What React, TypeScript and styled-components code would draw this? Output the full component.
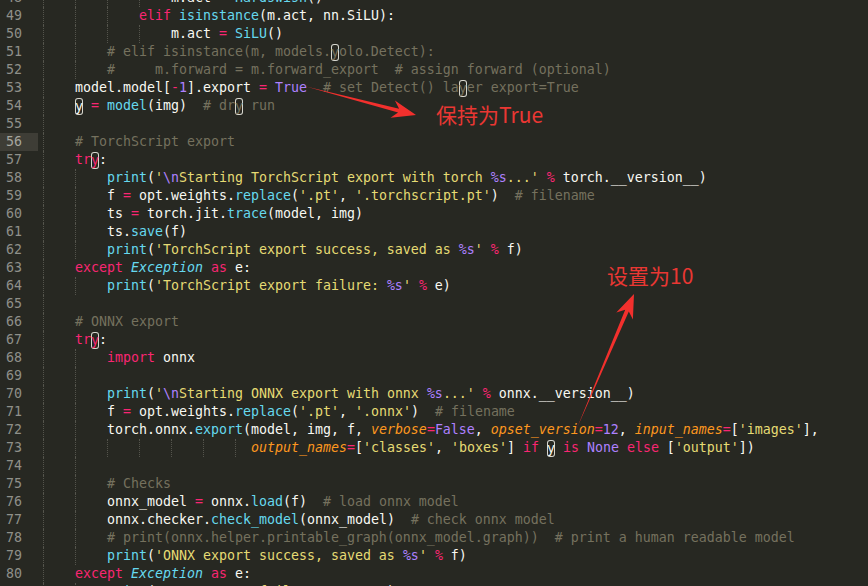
import React from 'react';
import styled, { createGlobalStyle, css } from 'styled-components';

const GlobalStyle = createGlobalStyle`
  html, body {
    margin: 0;
    padding: 0;
    background: #272822;
    overflow: hidden;
  }
`;

type Kind = 't' | 'k' | 'f' | 's' | 'c' | 'n' | 'a' | 'e';

const colors: Record<Kind, string> = {
  t: '#f8f8f2',
  k: '#f92672',
  f: '#66d9ef',
  s: '#e6db74',
  c: '#75715e',
  n: '#ae81ff',
  a: '#fd971f',
  e: '#66d9ef',
};

// {kind|text}, kind followed by "b" draws the find-match box round it
const source: [number, string][] = [
  [48, '                m.act {k|=} {f|Hardswish}()'],
  [49, '            {k|elif} {f|isinstance}(m.act, nn.SiLU):'],
  [50, '                m.act {k|=} {f|SiLU}()'],
  [51, '        {c|# elif isinstance(m, models.}{cb|y}{c|olo.Detect):}'],
  [52, '        {c|#     m.forward = m.forward_export  # assign forward (optional)}'],
  [53, '    model.model[{k|-}{n|1}].export {k|=} {n|True}  {c|# set Detect() la}{cb|y}{c|er export=True}'],
  [54, '    {tb|y} {k|=} {f|model}(img)  {c|# dr}{cb|y}{c| run}'],
  [55, ''],
  [56, '    {c|# TorchScript export}'],
  [57, '    {k|tr}{kb|y}:'],
  [58, "        {f|print}({s|'}{n|\\n}{s|Starting TorchScript export with torch }{n|%s}{s|...'} {k|%} torch.__version__)"],
  [59, "        f {k|=} opt.weights.{f|replace}({s|'.pt'}, {s|'.torchscript.pt'})  {c|# filename}"],
  [60, '        ts {k|=} torch.jit.{f|trace}(model, img)'],
  [61, '        ts.{f|save}(f)'],
  [62, "        {f|print}({s|'TorchScript export success, saved as }{n|%s}{s|'} {k|%} f)"],
  [63, '    {k|except} {e|Exception} {k|as} e:'],
  [64, "        {f|print}({s|'TorchScript export failure: }{n|%s}{s|'} {k|%} e)"],
  [65, ''],
  [66, '    {c|# ONNX export}'],
  [67, '    {k|tr}{kb|y}:'],
  [68, '        {k|import} onnx'],
  [69, ''],
  [70, "        {f|print}({s|'}{n|\\n}{s|Starting ONNX export with onnx }{n|%s}{s|...'} {k|%} onnx.__version__)"],
  [71, "        f {k|=} opt.weights.{f|replace}({s|'.pt'}, {s|'.onnx'})  {c|# filename}"],
  [72, "        torch.onnx.{f|export}(model, img, f, {a|verbose}{k|=}{n|False}, {a|opset_version}{k|=}{n|12}, {a|input_names}{k|=}[{s|'images'}],"],
  [73, "                          {a|output_names}{k|=}[{s|'classes'}, {s|'boxes'}] {k|if} {tb|y} {k|is} {n|None} {k|else} [{s|'output'}])"],
  [74, ''],
  [75, '        {c|# Checks}'],
  [76, '        onnx_model {k|=} onnx.{f|load}(f)  {c|# load onnx model}'],
  [77, '        onnx.checker.{f|check_model}(onnx_model)  {c|# check onnx model}'],
  [78, '        {c|# print(onnx.helper.printable_graph(onnx_model.graph))  # print a human readable model}'],
  [79, "        {f|print}({s|'ONNX export success, saved as }{n|%s}{s|'} {k|%} f)"],
  [80, '    {k|except} {e|Exception} {k|as} e:'],
  [81, "        {f|print}({s|'ONNX export failure: }{n|%s}{s|'} {k|%} e)"],
];

// indent guides drawn on blank lines
const blankGuides: Record<number, number> = { 55: 1, 65: 1, 69: 2, 74: 2 };

const ACTIVE = 56;

type Token = { kind: Kind; text: string; boxed: boolean };

function tokenize(body: string): Token[] {
  const out: Token[] = [];
  const re = /\{(\w+)\|([^}]*)\}/g;
  let last = 0;
  let m: RegExpExecArray | null;
  while ((m = re.exec(body))) {
    if (m.index > last) out.push({ kind: 't', text: body.slice(last, m.index), boxed: false });
    const tag = m[1];
    out.push({ kind: tag[0] as Kind, text: m[2], boxed: tag.length > 1 });
    last = re.lastIndex;
  }
  if (last < body.length) out.push({ kind: 't', text: body.slice(last), boxed: false });
  return out;
}

function CodeLine({ no, text }: { no: number; text: string }) {
  const spaces = text.length - text.trimStart().length;
  const body = text.slice(spaces);
  const groups: number[] = [];
  if (body === '') {
    for (let i = 0; i < (blankGuides[no] || 0); i++) groups.push(4);
  } else {
    for (let i = 0; i < spaces; i += 4) groups.push(Math.min(4, spaces - i));
  }
  return (
    <Row>
      <LineNo $active={no === ACTIVE}>{no}</LineNo>
      <Code>
        {groups.map((w, i) => (
          <Indent key={i} $chars={w} />
        ))}
        {tokenize(body).map((t, i) => (
          <Tok key={i} $kind={t.kind} $boxed={t.boxed}>
            {t.text}
          </Tok>
        ))}
      </Code>
    </Row>
  );
}

export default function App() {
  return (
    <>
      <GlobalStyle />
      <Screen>
        <Editor>
          {source.map(([no, text]) => (
            <CodeLine key={no} no={no} text={text} />
          ))}
        </Editor>
        <Arrows width="868" height="586" viewBox="0 0 868 586">
          <polygon points="306,86.5 399.1,108.7 394.9,100.4 416,115 390.5,117.8 398.1,112.5" />
          <polygon points="577,428 628.8,311.4 632.9,319.6 634,294 616.3,312.6 625.2,309.8" />
        </Arrows>
        <Note $x={436} $y={102}>保持为True</Note>
        <Note $x={607} $y={263}>设置为10</Note>
      </Screen>
    </>
  );
}

const Screen = styled.div`
  position: relative;
  width: 868px;
  height: 586px;
  overflow: hidden;
  background: #272822;
`;

const Editor = styled.div`
  display: flex;
  flex-direction: column;
  margin-top: -11px;
  font-family: 'DejaVu Sans Mono', 'Liberation Mono', monospace;
  font-size: 13.29px;
`;

const Row = styled.div`
  display: flex;
  height: 18px;
  line-height: 18px;
`;

const LineNo = styled.div<{ $active: boolean }>`
  width: 38px;
  box-sizing: border-box;
  padding-right: 16px;
  text-align: right;
  color: ${(p) => (p.$active ? '#a6a69e' : '#8f908a')};
  background: ${(p) => (p.$active ? '#3e3d36' : 'transparent')};
`;

const Code = styled.div`
  display: flex;
  margin-left: 5px;
  white-space: pre;
`;

const Indent = styled.span<{ $chars: number }>`
  width: ${(p) => p.$chars * 8}px;
  box-sizing: border-box;
  border-left: 1px dotted #54544c;
`;

const Tok = styled.span<{ $kind: Kind; $boxed: boolean }>`
  color: ${(p) => colors[p.$kind]};
  font-style: ${(p) => (p.$kind === 'a' || p.$kind === 'e' ? 'italic' : 'normal')};
  ${(p) =>
    p.$boxed &&
    css`
      align-self: center;
      height: 17px;
      line-height: 17px;
      border-radius: 3px;
      box-shadow: inset 0 0 0 1px #d6d6ce;
    `}
`;

const Arrows = styled.svg`
  position: absolute;
  left: 0;
  top: 0;
  pointer-events: none;

  polygon {
    fill: #f2302d;
  }
`;

const Note = styled.div<{ $x: number; $y: number }>`
  position: absolute;
  left: ${(p) => p.$x}px;
  top: ${(p) => p.$y}px;
  font-family: 'Noto Sans CJK SC', 'Noto Sans', sans-serif;
  font-size: 21px;
  line-height: 24px;
  color: #ea3733;
  white-space: nowrap;
`;
